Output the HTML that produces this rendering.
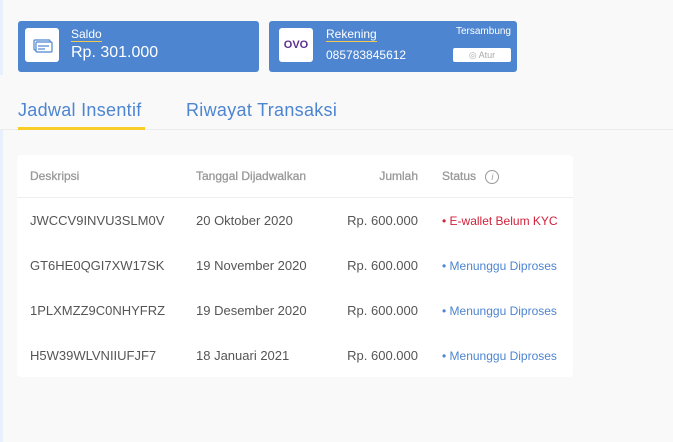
<!DOCTYPE html>
<html><head><style>
*{margin:0;padding:0;box-sizing:border-box}
body{width:673px;height:442px;background:#f9f9fa;font-family:"Liberation Sans",sans-serif;position:relative;overflow:hidden}
.strip{position:absolute;left:0;width:3px;background:#e9f0fd}
.card{position:absolute;top:21px;height:51px;background:#4d85d0;border-radius:3px;color:#fff}
.ib{position:absolute;left:7px;top:7px;width:34px;height:34px;background:#fff;border-radius:3px}
.lbl{position:absolute;font-size:12px;border-bottom:1px solid #f2c94c;line-height:14px}
.tab{position:absolute;top:100px;font-size:18px;color:#4d85d0;letter-spacing:.3px}
.tbl{position:absolute;left:17px;top:155px;width:556px;height:222px;background:#fff;border-radius:4px}
.c{position:absolute;font-size:13px;color:#555}
.h{font-size:12px;color:#999;font-weight:normal;-webkit-text-stroke:.3px #999}
.r{color:#d0213b;font-size:12px}.b{color:#4d85d0;font-size:12px}
</style></head><body>
<div class="strip" style="top:0;height:75px"></div>
<div class="strip" style="top:130px;height:312px"></div>
<div class="card" style="left:18px;width:241px">
 <div class="ib"><svg width="34" height="34" viewBox="0 0 34 34"><g fill="none" stroke="#4d85d0" stroke-width="1.2"><rect x="9" y="12" width="16" height="10" rx="1"/><rect x="11" y="14" width="16" height="10" rx="1" fill="#fff"/><line x1="13" y1="18" x2="24" y2="18"/><line x1="13" y1="21" x2="20" y2="21"/></g></svg></div>
 <div class="lbl" style="left:53px;top:6px">Saldo</div>
 <div style="position:absolute;left:53px;top:23px;font-size:16px">Rp. 301.000</div>
</div>
<div class="card" style="left:269px;width:248px">
 <div class="ib" style="left:10px"><div style="text-align:center;line-height:34px;color:#5b2f8e;font-weight:bold;font-size:11px">OVO</div></div>
 <div class="lbl" style="left:57px;top:6px">Rekening</div>
 <div style="position:absolute;left:57px;top:27px;font-size:12px">085783845612</div>
 <div style="position:absolute;right:6px;top:5px;font-size:10px">Tersambung</div>
 <div style="position:absolute;right:6px;top:27px;width:58px;height:14px;background:#fff;border-radius:2px;color:#aaa;font-size:9px;text-align:center;line-height:14px">◎ Atur</div>
</div>
<div style="position:absolute;left:0;top:129px;width:673px;height:1px;background:#ececec"></div>
<div class="tab" style="left:18px">Jadwal Insentif</div>
<div style="position:absolute;left:18px;top:127px;width:127px;height:3px;background:#f8cd2a"></div>
<div class="tab" style="left:186px">Riwayat Transaksi</div>
<div class="tbl">
 <div style="position:absolute;left:0;top:42px;width:556px;height:1px;background:#eee"></div>
 <div class="c h" style="left:13px;top:14px">Deskripsi</div>
 <div class="c h" style="left:179px;top:14px">Tanggal Dijadwalkan</div>
 <div class="c h" style="right:155px;top:14px">Jumlah</div>
 <div class="c h" style="left:425px;top:14px">Status <span style="display:inline-block;width:14px;height:14px;border:1px solid #999;border-radius:50%;font-size:9px;text-align:center;line-height:12px;font-style:italic;-webkit-text-stroke:0;margin-left:6px">i</span></div>

 <div class="c" style="left:13px;top:58px">JWCCV9INVU3SLM0V</div>
 <div class="c" style="left:179px;top:58px">20 Oktober 2020</div>
 <div class="c" style="right:155px;top:58px">Rp. 600.000</div>
 <div class="c r" style="left:425px;top:59px">• E-wallet Belum KYC</div>

 <div class="c" style="left:13px;top:103px">GT6HE0QGI7XW17SK</div>
 <div class="c" style="left:179px;top:103px">19 November 2020</div>
 <div class="c" style="right:155px;top:103px">Rp. 600.000</div>
 <div class="c b" style="left:425px;top:104px">• Menunggu Diproses</div>

 <div class="c" style="left:13px;top:148px">1PLXMZZ9C0NHYFRZ</div>
 <div class="c" style="left:179px;top:148px">19 Desember 2020</div>
 <div class="c" style="right:155px;top:148px">Rp. 600.000</div>
 <div class="c b" style="left:425px;top:149px">• Menunggu Diproses</div>

 <div class="c" style="left:13px;top:193px">H5W39WLVNIIUFJF7</div>
 <div class="c" style="left:179px;top:193px">18 Januari 2021</div>
 <div class="c" style="right:155px;top:193px">Rp. 600.000</div>
 <div class="c b" style="left:425px;top:194px">• Menunggu Diproses</div>
</div>
</body></html>
